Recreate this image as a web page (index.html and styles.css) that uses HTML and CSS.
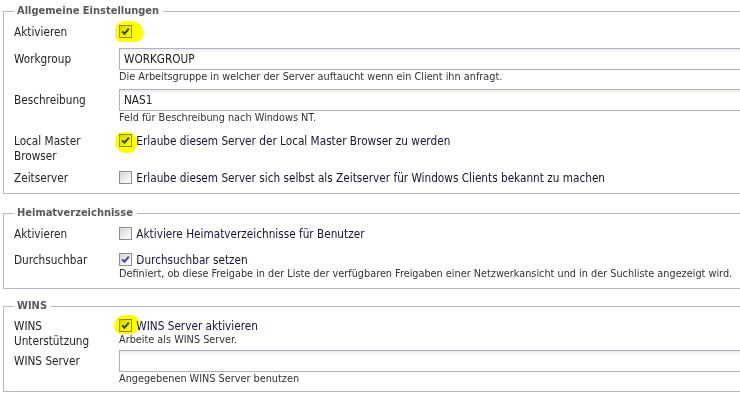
FILE: index.html
```html
<!DOCTYPE html>
<html lang="de">
<head>
<meta charset="utf-8">
<title>Samba Einstellungen</title>
<link rel="stylesheet" href="styles.css">
</head>
<body>
<div class="page">

<!-- Allgemeine Einstellungen -->
<fieldset class="group">
  <legend>Allgemeine Einstellungen</legend>
  <div class="row">
    <span class="label">Aktivieren</span>
    <div class="field">
      <span class="cb on"><svg viewBox="0 0 11 11"><path d="M2.2 5.4 L4.4 7.8 L8.8 2.6"/></svg><span class="hl hl-a"></span></span>
    </div>
  </div>
  <div class="row sp-9">
    <span class="label mid">Workgroup</span>
    <div class="field">
      <div class="text">WORKGROUP</div>
      <div class="help">Die Arbeitsgruppe in welcher der Server auftaucht wenn ein Client ihn anfragt.</div>
    </div>
  </div>
  <div class="row sp-6">
    <span class="label mid">Beschreibung</span>
    <div class="field">
      <div class="text">NAS1</div>
      <div class="help">Feld für Beschreibung nach Windows NT.</div>
    </div>
  </div>
  <div class="row sp-10">
    <span class="label two">Local Master Browser</span>
    <div class="field">
      <span class="cb on"><svg viewBox="0 0 11 11"><path d="M2.2 5.4 L4.4 7.8 L8.8 2.6"/></svg><span class="hl hl-b"></span></span>
      <span class="opt">Erlaube diesem Server der Local Master Browser zu werden</span>
    </div>
  </div>
  <div class="row sp-7">
    <span class="label">Zeitserver</span>
    <div class="field">
      <span class="cb"></span>
      <span class="opt">Erlaube diesem Server sich selbst als Zeitserver für Windows Clients bekannt zu machen</span>
    </div>
  </div>
</fieldset>

<!-- Heimatverzeichnisse -->
<fieldset class="group">
  <legend>Heimatverzeichnisse</legend>
  <div class="row">
    <span class="label">Aktivieren</span>
    <div class="field">
      <span class="cb"></span>
      <span class="opt">Aktiviere Heimatverzeichnisse für Benutzer</span>
    </div>
  </div>
  <div class="row sp-12">
    <span class="label">Durchsuchbar</span>
    <div class="field">
      <span class="cb on"><svg viewBox="0 0 11 11"><path d="M2.2 5.4 L4.4 7.8 L8.8 2.6"/></svg></span>
      <span class="opt">Durchsuchbar setzen</span>
      <div class="help">Definiert, ob diese Freigabe in der Liste der verfügbaren Freigaben einer Netzwerkansicht und in der Suchliste angezeigt wird.</div>
    </div>
  </div>
</fieldset>

<!-- WINS -->
<fieldset class="group last">
  <legend>WINS</legend>
  <div class="row">
    <span class="label two">WINS Unterstützung</span>
    <div class="field">
      <span class="cb on"><svg viewBox="0 0 11 11"><path d="M2.2 5.4 L4.4 7.8 L8.8 2.6"/></svg><span class="hl hl-c"></span></span>
      <span class="opt">WINS Server aktivieren</span>
      <div class="help">Arbeite als WINS Server.</div>
    </div>
  </div>
  <div class="row sp-1">
    <span class="label mid">WINS Server</span>
    <div class="field">
      <div class="text"></div>
      <div class="help">Angegebenen WINS Server benutzen</div>
    </div>
  </div>
</fieldset>

</div>
</body>
</html>
```

FILE: styles.css
```css
html, body {
  margin: 0;
  background: #fff;
  overflow: hidden;
}
body {
  font-family: "DejaVu Sans Condensed", "DejaVu Sans", sans-serif;
  font-stretch: condensed;
  font-size: 11.7px;
  line-height: 14px;
  color: #222;
}
.page {
  width: 820px;
  padding-left: 3px;
}

/* the three boxes */
.group {
  margin: 4px 0 0 0;
  padding: 7px 10px 8px 10px;
  border: 1px solid #b6b6c8;
  min-inline-size: 0;
}
.group + .group {
  margin-top: 12px;
}
.group + .group + .group {
  margin-top: 10px;
}
.group.last {
  padding-top: 6px;
  padding-bottom: 6px;
}
.group legend {
  padding: 0 4px 0 3px;
  font-size: 11px;
  font-weight: bold;
  color: #585858;
  line-height: 14px;
}

/* one line of the form */
.row {
  display: grid;
  grid-template-columns: 105px 1fr;
  align-items: start;
}
.sp-1 { margin-top: 1px; }
.sp-6 { margin-top: 6px; }
.sp-7 { margin-top: 7px; }
.sp-9 { margin-top: 9px; }
.sp-10 { margin-top: 10px; }
.sp-12 { margin-top: 12px; }

.label {
  color: #252525;
}
.label.mid {
  line-height: 22px;
}
.label.two {
  line-height: 15px;
  width: 90px;
}

.field {
  position: relative;
}
.opt {
  color: #14143a;
  margin-left: 1px;
}
.help {
  font-size: 10.8px;
  line-height: 13px;
  color: #333;
}

/* text inputs */
.text {
  box-sizing: border-box;
  height: 22px;
  border: 1px solid #b0b0c6;
  padding: 0 4px;
  line-height: 20px;
  color: #1a1a1a;
  background: #fff;
  box-shadow: inset 0 4px 4px -3px rgba(0, 0, 0, 0.13);
}

/* checkboxes */
.cb {
  position: relative;
  display: inline-block;
  box-sizing: border-box;
  width: 13px;
  height: 13px;
  vertical-align: -2px;
  border: 1px solid #8c8c94;
  background: linear-gradient(135deg, #d6d6d6, #f4f4f4 70%, #fff);
}
.cb svg {
  display: block;
  width: 11px;
  height: 11px;
}
.cb svg path {
  fill: none;
  stroke: #3d4aa0;
  stroke-width: 2;
}

/* yellow marker strokes over the checkboxes */
.hl {
  position: absolute;
  background: #ffff00;
  mix-blend-mode: multiply;
}
.hl-a {
  left: -5px;
  top: -5px;
  width: 28px;
  height: 21px;
  border-radius: 9px 12px 8px 6px;
}
.hl-b {
  left: -5px;
  top: -3px;
  width: 22px;
  height: 21px;
  border-radius: 8px 10px 9px 11px;
}
.hl-c {
  left: -6px;
  top: -5px;
  width: 25px;
  height: 19px;
  border-radius: 10px 8px 9px 7px;
}
```
